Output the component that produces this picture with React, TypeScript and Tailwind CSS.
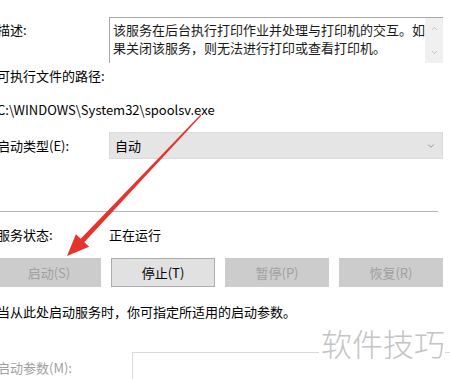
import { ChevronDown, ChevronUp } from "lucide-react";

const FONT = { fontFamily: '"Noto Sans CJK SC", "Noto Sans", sans-serif' };

function Arrow() {
  // red pointer drawn over the dialog, from the dropdown down to the start button
  return (
    <svg className="absolute left-0 top-0 pointer-events-none" width="450" height="379">
      <polygon
        points="201.4,115.4 200.6,114.6 80.7,238.8 75.9,234.3 67,256 89.1,246.7 84.3,242.2"
        fill="#e8322c"
      />
    </svg>
  );
}

function SmallBtn({ label, enabled }: { label: string; enabled?: boolean }) {
  return (
    <div
      className={`h-[29px] flex items-center justify-center text-[13px] ${
        enabled ? "bg-[#e1e1e1] border border-[#adadad] text-black" : "bg-[#cccccc] text-[#a0a0a0]"
      }`}
    >
      {label}
    </div>
  );
}

export default function App() {
  return (
    <div className="relative w-[450px] h-[379px] overflow-hidden bg-white text-black" style={FONT}>
      <div className="ml-[-3px] pr-[7px] pt-[17px] text-[13px] leading-[18px]">
        {/* description */}
        <div className="grid grid-cols-[112px_1fr]">
          <div className="mt-[4px]">描述:</div>
          <div className="h-[46px] flex border-t border-l border-[#a9a9a9]">
            <div className="flex-1 pl-[3px] pt-[3px] text-[#1a1a1a]">
              该服务在后台执行打印作业并处理与打印机的交互。如果关闭该服务，则无法进行打印或查看打印机。
            </div>
            <div className="w-[18px] bg-[#f0f0f0] flex flex-col items-center justify-between py-[6px] text-[#b0b0b0]">
              <ChevronUp size={9} />
              <ChevronDown size={9} />
            </div>
          </div>
        </div>

        <div className="mt-[4px]">可执行文件的路径:</div>
        <div className="mt-[16px]">C:\WINDOWS\System32\spoolsv.exe</div>

        {/* startup type */}
        <div className="mt-[13px] grid grid-cols-[112px_1fr] items-center">
          <div>启动类型(E):</div>
          <div className="h-[27px] bg-[#e5e5e5] border border-[#dadada] flex items-center justify-between pl-[5px] pr-[6px]">
            <span>自动</span>
            <ChevronDown size={10} className="text-[#8a8a8a]" />
          </div>
        </div>

        <div className="mt-[52px] mr-[5px] h-px bg-[#b4b4b4]" />

        <div className="mt-[14px] grid grid-cols-[112px_1fr]">
          <div>服务状态:</div>
          <div>正在运行</div>
        </div>

        <div className="mt-[14px] grid grid-cols-4 gap-[10px]">
          <SmallBtn label="启动(S)" />
          <SmallBtn label="停止(T)" enabled />
          <SmallBtn label="暂停(P)" />
          <SmallBtn label="恢复(R)" />
        </div>

        <div className="mt-[16px]">当从此处启动服务时，你可指定所适用的启动参数。</div>

        <div className="mt-[31px] grid grid-cols-[135px_1fr]">
          <div className="mt-[7px] text-[#a0a0a0]">启动参数(M):</div>
          <div className="h-[40px] mr-[-20px] border-t border-l border-[#d9d9d9]" />
        </div>
      </div>

      {/* watermark */}
      <div className="absolute left-[319px] top-[323px] text-[31px] leading-[40px] text-[#c4c4c4] font-light bg-white pl-[2px]">
        软件技巧
      </div>

      <Arrow />
    </div>
  );
}
